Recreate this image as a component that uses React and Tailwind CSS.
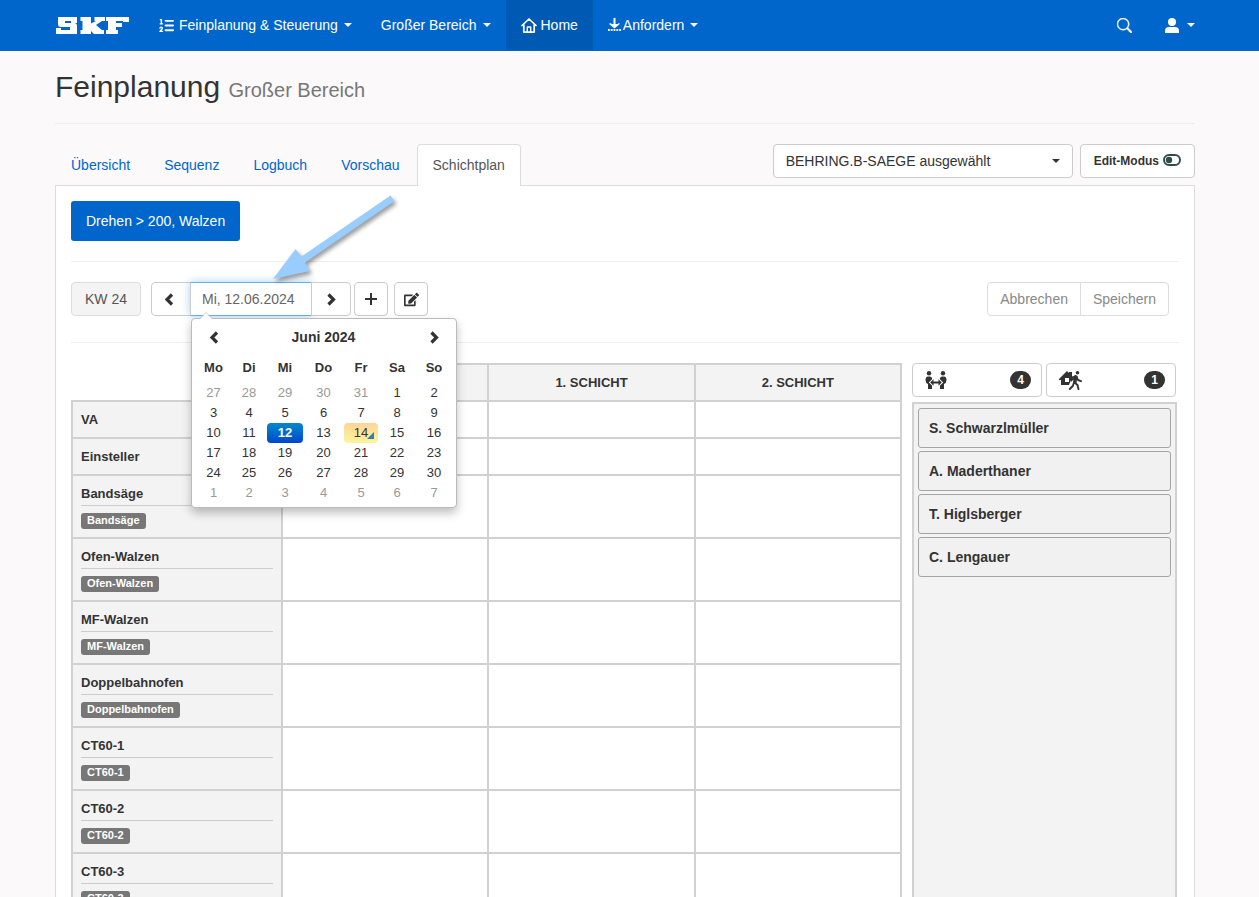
import React from 'react';
import { FaListOl } from 'react-icons/fa6';
import { BsSearch } from 'react-icons/bs';
import { FaEdit } from 'react-icons/fa';

function Caret() {
  return (
    <svg width="8" height="4" viewBox="0 0 8 4" fill="currentColor" aria-hidden="true">
      <path d="M0 0h8L4 4z" />
    </svg>
  );
}

function Chevron({ right = false }) {
  return (
    <svg width="10" height="13" viewBox="0 0 10 13" fill="none" stroke="#333" strokeWidth="3.200" aria-hidden="true">
      {right ? <path d="M2.500 1.500L7.500 6.500 2.500 11.500" /> : <path d="M8 1.500L3 6.500 8 11.500" />}
    </svg>
  );
}

function Logo() {
  return (
    <svg width="73" height="17" viewBox="0 0 73 17" fill="#fff" role="img" aria-label="SKF">
      <path d="M2 0H21V6H15V4H9V6H18Q21 6 21 9V17H0V11H5V13H14V10H5Q2 10 2 7Z" />
      <path d="M24.500 0H35V6.500L40 4H38.500V0H49V4H46L40 8L46 13H48V17H38L35 14V17H24.500V13H26.500V4H24.500Z" />
      <path d="M50 0H73V5H67V4H60V6H66V10H60V13H62V17H50V13H52V4H50Z" />
    </svg>
  );
}

function DownloadIcon() {
  return (
    <svg width="13" height="14" viewBox="0 0 13 14" fill="#fff" aria-hidden="true">
      <path d="M5.500 0h2v6h2l1.500-1 .8.900L6.500 10.500 1.200 5.900 2 5l2 1h1.500z" />
      <path d="M0 11h1.800v2H0zM2.800 11h1.800v2H2.800zM5.600 11h1.800v2H5.600zM8.400 11h1.800v2H8.400zM11.200 11H13v2h-1.800z" />
    </svg>
  );
}

function ToggleIcon() {
  return (
    <svg className="mb-0.5" width="18" height="12" viewBox="0 0 18 12" aria-hidden="true">
      <rect x="1" y="1" width="16" height="10" rx="5" fill="none" stroke="#2f4f4f" strokeWidth="2" />
      <circle cx="6" cy="6" r="3.200" fill="#2f4f4f" />
    </svg>
  );
}

function PeopleIcon() {
  return (
    <svg width="22" height="19" viewBox="0 0 22 19" fill="#333" aria-hidden="true">
      <circle cx="4" cy="2.300" r="2.200" />
      <circle cx="18" cy="2.300" r="2.200" />
      <path d="M3 5.500h2q2 0 2.300 2.500L3.800 11.500 7 14.500V18H3v-5Q.5 12 .5 9 .5 5.500 3 5.500z" />
      <path d="M19 5.500h-2q-2 0-2.300 2.500l3.500 3.500L15 14.500V18h4v-5q2.500-1 2.500-4 0-3.500-2.500-3.500z" />
      <path d="M5.200 11.500L8.500 8.300v2.300h5V8.300l3.300 3.200-3.300 3.200v-2.300h-5v2.300z" />
    </svg>
  );
}

function LeaveHouseIcon() {
  return (
    <svg width="23" height="19" viewBox="0 0 23 19" fill="none" aria-hidden="true">
      <path fillRule="evenodd" fill="#333" d="M0 8L8 0l2 2V1h3v4l2.500 3-1 1h-2.500l-2 5H2V9H0zM6 7v4h4V7z" />
      <circle cx="18.500" cy="1.800" r="1.800" fill="#333" />
      <path d="M16.500 5l-1.500 6 3.500 3 1 4.200M15 11.500l-1.200 3.500-3 3M16.500 5.200l-3 1.300-1 3M17.500 5.500l1.500 3.500 3 1.200" stroke="#333" strokeWidth="1.900" strokeLinecap="round" strokeLinejoin="round" />
      <path d="M15.500 4.500l3 .5-1 7-3-.5z" fill="#333" />
    </svg>
  );
}

const tabs = ['Übersicht', 'Sequenz', 'Logbuch', 'Vorschau'];
const machines = ['Bandsäge', 'Ofen-Walzen', 'MF-Walzen', 'Doppelbahnofen', 'CT60-1', 'CT60-2', 'CT60-3'];
const people = ['S. Schwarzlmüller', 'A. Maderthaner', 'T. Higlsberger', 'C. Lengauer'];
const weekdays = ['Mo', 'Di', 'Mi', 'Do', 'Fr', 'Sa', 'So'];
const weeks = [
  [27, 28, 29, 30, 31, 1, 2],
  [3, 4, 5, 6, 7, 8, 9],
  [10, 11, 12, 13, 14, 15, 16],
  [17, 18, 19, 20, 21, 22, 23],
  [24, 25, 26, 27, 28, 29, 30],
  [1, 2, 3, 4, 5, 6, 7],
];

function Navbar() {
  return (
    <nav className="bg-[#0066cc] pr-[9px] text-white">
      <div className="mx-auto flex h-[51px] max-w-[1140px] items-stretch pb-px">
        <a href="#start" className="flex items-center pl-px pr-[15px] pt-px"><Logo /></a>
        <a href="#planung" className="flex items-center pl-[15px] pr-[14px]">
          <FaListOl className="mr-[5px] size-[15px]" />
          <span className="mr-1.5">Feinplanung &amp; Steuerung</span>
          <Caret />
        </a>
        <a href="#bereich" className="flex items-center gap-1.5 px-[15px]">Großer Bereich <Caret /></a>
        <a href="#home" className="flex items-center gap-1 bg-[#005ab4] px-[15px]">
          <svg width="16" height="15" viewBox="0 0 16 15" fill="none" stroke="#fff" strokeWidth="1.700" strokeLinecap="round" strokeLinejoin="round" aria-hidden="true">
            <path d="M1 7.500L8 1l7 6.500M2.800 6.500v7.600h10.400V6.500" />
            <path d="M6.300 14V9h3.400v5" strokeWidth="1.400" />
          </svg>
          Home
        </a>
        <a href="#anfordern" className="flex items-center px-[15px]">
          <DownloadIcon />
          <span className="ml-0.5 mr-1.5">Anfordern</span>
          <Caret />
        </a>
        <div className="ml-auto flex items-center">
          <button type="button" aria-label="Suche" className="p-4"><BsSearch className="size-[15px] stroke-current stroke-[0.5px]" /></button>
          <a href="#profil" aria-label="Profil" className="flex items-center gap-2 py-4 pl-[17px]">
            <svg width="14" height="15" viewBox="0 0 14 15" fill="#fff" aria-hidden="true">
              <circle cx="7" cy="4" r="4" />
              <path d="M0 15v-2q0-4 4-4h6q4 0 4 4v2z" />
            </svg>
            <Caret />
          </a>
        </div>
      </div>
    </nav>
  );
}

function dayClass(week, day) {
  if (week === 2 && day === 12) {
    return 'rounded bg-linear-to-b from-[#0088cc] to-[#0044cc] font-bold text-white';
  }
  if (week === 2 && day === 14) return 'rounded bg-linear-to-b from-[#fdd49a] to-[#fdf59a]';
  if ((week === 0 && day > 20) || week === 5) return 'text-[#999]';
  return '';
}

function Calendar() {
  return (
    <div className="absolute left-px top-9 z-20 w-[266px] rounded border border-[#bbb] bg-white px-1 pb-1 pt-[3px] text-[#333] shadow-[0_5px_10px_rgba(0,0,0,0.25)]">
      <svg className="absolute -top-[7px] left-[7px]" width="14" height="8" viewBox="0 0 14 8" aria-hidden="true">
        <path d="M0 8L7 1l7 7z" fill="#fff" />
        <path d="M0 7.500L7 .5l7 7" fill="none" stroke="#ccc" />
      </svg>
      <table className="w-full table-fixed border-separate border-spacing-0 text-center">
        <colgroup>
          <col className="w-[35px]" /><col className="w-[36px]" /><col className="w-[36px]" /><col className="w-[41px]" />
          <col className="w-[34px]" /><col className="w-[38px]" /><col />
        </colgroup>
        <thead>
          <tr className="h-[30px]">
            <th className="p-0"><button type="button" aria-label="Voriger Monat" className="block w-full"><span className="flex justify-center"><Chevron /></span></button></th>
            <th colSpan={5} className="p-0">Juni 2024</th>
            <th className="p-0"><button type="button" aria-label="Nächster Monat" className="block w-full"><span className="flex justify-center"><Chevron right /></span></button></th>
          </tr>
          <tr className="h-[31px]">
            {weekdays.map((d) => <th key={d} className="p-0 text-[13px]">{d}</th>)}
          </tr>
        </thead>
        <tbody className="text-[13px]">
          {weeks.map((week, w) => (
            <tr key={w} className="h-5">
              {week.map((day) => (
                <td key={day} className={`relative p-0 leading-5 ${dayClass(w, day)}`}>
                  {day}
                  {w === 2 && day === 14 && (
                    <svg className="absolute bottom-1 right-1" width="7" height="7" viewBox="0 0 7 7" aria-hidden="true"><path d="M7 0v7H0z" fill="#337ab7" /></svg>
                  )}
                </td>
              ))}
            </tr>
          ))}
        </tbody>
      </table>
    </div>
  );
}

function Pointer() {
  return (
    <svg className="pointer-events-none absolute -top-[90px] left-[80px] z-30 drop-shadow-[2px_3px_2px_rgba(0,0,0,0.4)]" width="130" height="92" viewBox="0 0 130 92" aria-hidden="true">
      <path d="M3 87L25.500 57 31.500 64.500 120.500 3.500 124.500 9 35 70.500 40 79z" fill="#99ccff" />
    </svg>
  );
}

function Toolbar() {
  const box = 'flex h-[34px] items-center justify-center border border-[#ccc] bg-white text-[#333]';
  return (
    <div className="flex pr-[10px]">
      <div className="flex h-[34px] w-[70px] items-center justify-center rounded border border-[#ddd] bg-[#f4f4f4] text-[#555]">KW 24</div>
      <div className="relative ml-[10px] flex">
        <button type="button" aria-label="Voriger Tag" className={`${box} w-10 rounded-l pr-1`}><Chevron /></button>
        <div className="relative -ml-px">
          <input aria-label="Datum" defaultValue="Mi, 12.06.2024" className="h-[34px] w-[122px] border border-x-[#ccc] border-y-[#66afe9] bg-white px-[11px] text-[#666] shadow-[0_0_8px_rgba(102,175,233,0.6)] outline-none" />
          <Calendar />
          <Pointer />
        </div>
        <button type="button" aria-label="Nächster Tag" className={`${box} z-10 -ml-px w-10 rounded-r`}><Chevron right /></button>
      </div>
      <button type="button" aria-label="Hinzufügen" className={`${box} ml-[3px] w-[34px] rounded`}>
        <svg width="12" height="12" viewBox="0 0 12 12" stroke="#333" strokeWidth="2" aria-hidden="true"><path d="M6 0v12M0 6h12" /></svg>
      </button>
      <button type="button" aria-label="Bearbeiten" className={`${box} ml-1.5 w-[34px] rounded`}><FaEdit className="size-[15px]" /></button>
      <div className="ml-auto flex text-[#888]">
        <button type="button" className="h-[34px] rounded-l border border-[#ddd] px-3">Abbrechen</button>
        <button type="button" className="-ml-px h-[34px] rounded-r border border-[#ddd] px-3">Speichern</button>
      </div>
    </div>
  );
}

function Plan() {
  const cell = 'border-2 border-[#d1d1d1]';
  return (
    <div className="min-w-0 flex-1">
      <table className="w-full table-fixed border-collapse text-left text-[13px]">
        <colgroup><col className="w-[210px]" /><col /><col /><col /></colgroup>
        <thead>
          <tr className="h-[37px] text-center">
            <td className="p-0" />
            <td className={`${cell} bg-[#f3f3f3] p-0`} />
            {['1. SCHICHT', '2. SCHICHT'].map((s) => <th key={s} className={`${cell} bg-[#f3f3f3] p-0`}>{s}</th>)}
          </tr>
        </thead>
        <tbody>
          {['VA', 'Einsteller'].map((r) => (
            <tr key={r} className="h-[37px]">
              <th className={`${cell} bg-[#f3f3f3] px-2 py-0`}>{r}</th>
              <td className={cell} /><td className={cell} /><td className={cell} />
            </tr>
          ))}
          {machines.map((m) => (
            <tr key={m} className="h-[63px]">
              <th className={`${cell} bg-[#f3f3f3] px-2 py-2 align-top`}>
                <div className="h-[22px] border-b border-[#ccc] leading-5">{m}</div>
                <span className="mt-[7px] block h-4 w-fit rounded-[3px] bg-[#777] px-1.5 text-[11px] leading-[15px] text-white">{m}</span>
              </th>
              <td className={cell} /><td className={cell} /><td className={cell} />
            </tr>
          ))}
        </tbody>
      </table>
    </div>
  );
}

function Staff() {
  const box = 'flex h-[34px] flex-1 items-center justify-between rounded border border-[#ccc] bg-white pl-3 pr-[10px] text-[#333]';
  const badge = 'flex h-[18px] w-[21px] items-center justify-center rounded-full bg-[#333] text-xs font-bold text-white';
  return (
    <aside className="flex w-[265px] shrink-0 flex-col gap-[5px]">
      <div className="flex gap-1 pr-px">
        <button type="button" aria-label="Anwesend" className={box}><PeopleIcon /><span className={badge}>4</span></button>
        <button type="button" aria-label="Abwesend" className={box}><LeaveHouseIcon /><span className={badge}>1</span></button>
      </div>
      <ul className="flex flex-1 flex-col gap-[3px] border-2 border-[#d1d1d1] bg-[#f3f3f3] p-1">
        {people.map((p) => (
          <li key={p} className="flex h-10 items-center rounded-[3px] border border-[#a5a5a5] bg-[#f1f1f1] px-[10px] font-bold">{p}</li>
        ))}
      </ul>
    </aside>
  );
}

export default function App() {
  return (
    <div className="h-screen overflow-hidden bg-[#fbf9fa] font-['Liberation_Sans',Arial,sans-serif] text-sm leading-5 text-[#333]">
      <Navbar />
      <main className="pr-[9px]">
        <div className="mx-auto max-w-[1140px]">
          <header className="h-[73px] border-b border-[#eee] pt-[18px]">
            <h1 className="text-[30px] leading-[36px]">Feinplanung <small className="text-xl text-[#777]">Großer Bereich</small></h1>
          </header>
          <div className="relative z-10 flex pt-5">
            <div className="-mb-px flex h-[42px]">
              <div className="flex gap-0.5 pr-px">
                {tabs.map((t) => <a key={t} href="#tab" className="flex items-center px-4 text-[#0066cc]">{t}</a>)}
              </div>
              <a href="#schichtplan" aria-current="page" className="flex items-center rounded-t border border-b-0 border-[#ddd] bg-white px-[15px] pb-px text-[#555]">Schichtplan</a>
            </div>
            <div className="ml-auto flex gap-[7px]">
              <button type="button" className="flex h-[34px] w-[300px] items-center justify-between rounded border border-[#ccc] bg-white px-3">BEHRING.B-SAEGE ausgewählt <Caret /></button>
              <button type="button" className="flex h-[34px] items-center gap-1 rounded border border-[#ccc] bg-white px-[13px] text-xs font-bold">Edit-Modus <ToggleIcon /></button>
            </div>
          </div>
          <section className="border border-[#ddd] bg-white px-[15px] pt-[15px]">
            <button type="button" className="block h-10 rounded-[3px] bg-[#0066cc] px-[15px] text-white">Drehen &gt; 200, Walzen</button>
            <hr className="my-5 border-[#eee]" />
            <Toolbar />
            <hr className="mb-5 mt-[26px] border-[#eee]" />
            <div className="flex gap-[10px] pr-0.5">
              <Plan />
              <Staff />
            </div>
          </section>
        </div>
      </main>
    </div>
  );
}
